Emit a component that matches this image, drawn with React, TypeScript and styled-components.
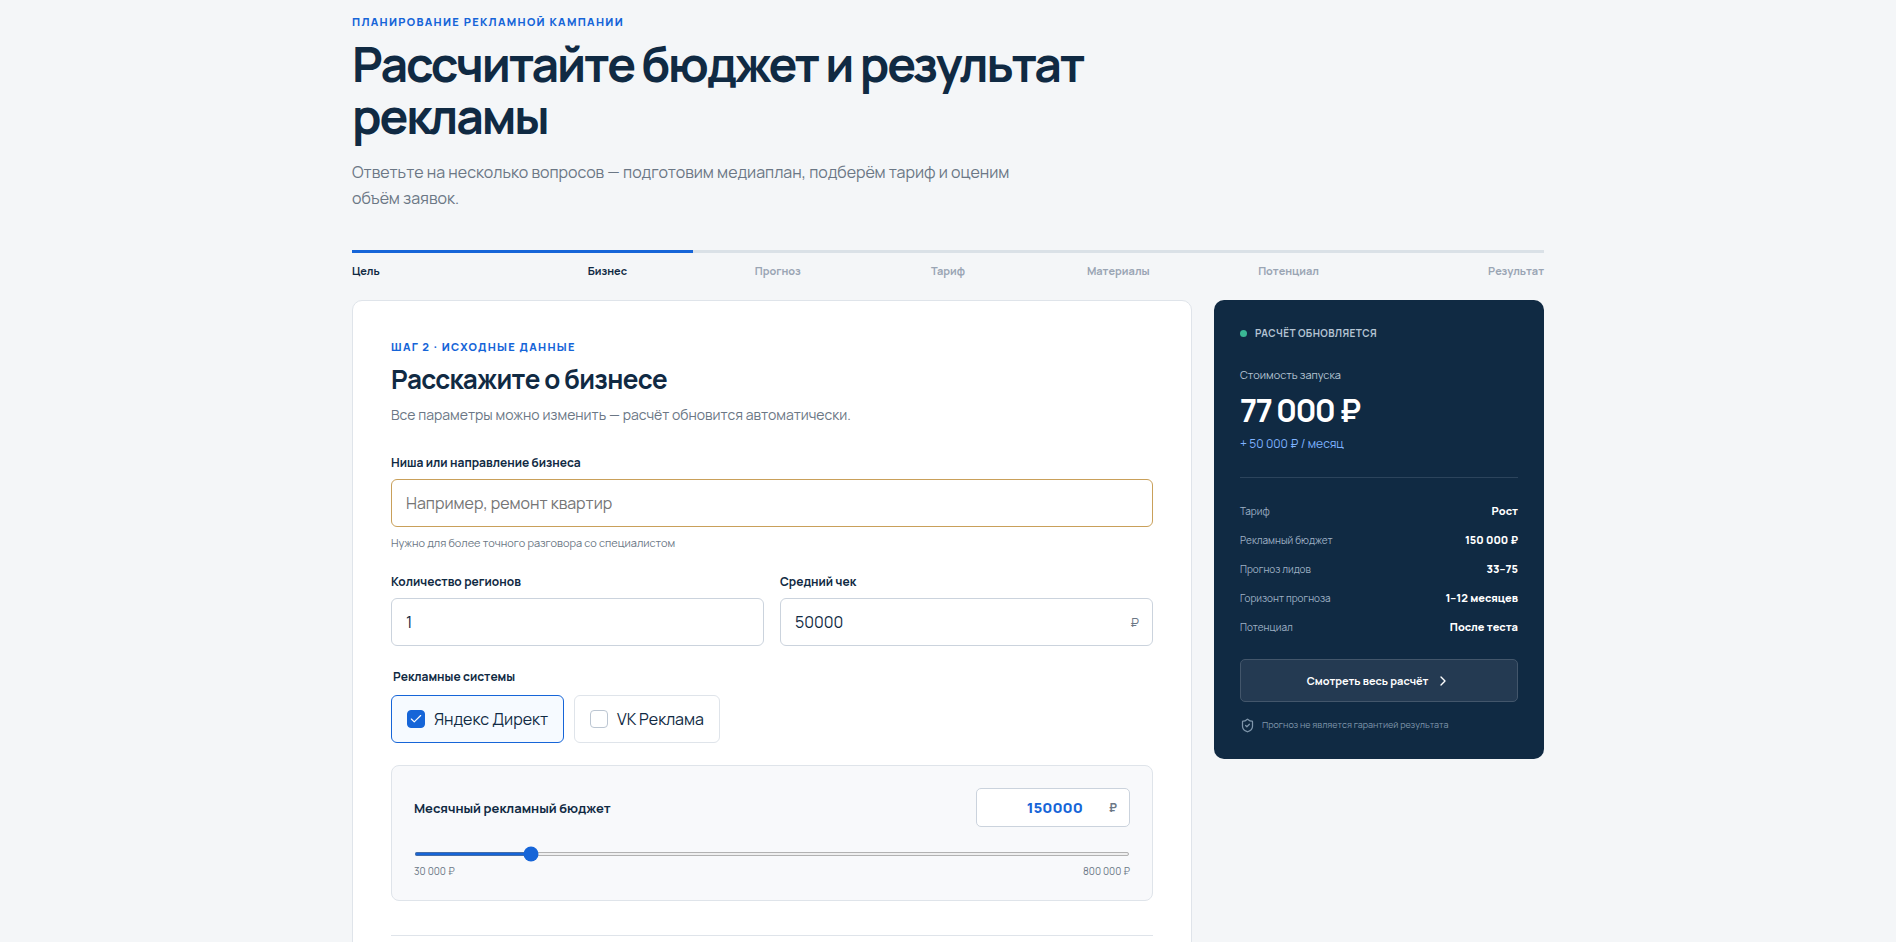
import React, { useState } from 'react';
import styled, { createGlobalStyle } from 'styled-components';
import { Check, ChevronRight, ShieldCheck } from 'lucide-react';

const navy = '#102a43';
const blue = '#1665d8';
const muted = '#6b7785';
const line = '#dfe4ea';
const fieldLine = '#cbd3dd';

const GlobalStyle = createGlobalStyle`
  *, *::before, *::after { box-sizing: border-box; }
  body {
    margin: 0;
    background: #f4f6f8;
    color: ${navy};
    font-family: Manrope, Inter, sans-serif;
    font-size: 16px;
  }
  button, input { font: inherit; color: inherit; }
  h1, h2, p, dl, dd, ol, fieldset { margin: 0; padding: 0; }
`;

const Screen = styled.div`
  height: 100vh;
  overflow-y: auto;
  scrollbar-width: none;
`;

const Page = styled.main`
  max-width: 1240px;
  margin: 0 auto;
  padding: 14px 24px 40px;
`;

const Eyebrow = styled.p`
  color: ${blue};
  font-size: 11px;
  line-height: 16px;
  font-weight: 800;
  letter-spacing: 0.12em;
  text-transform: uppercase;
`;

const Title = styled.h1`
  max-width: 780px;
  margin-top: 8px;
  font-size: 48px;
  line-height: 52px;
  font-weight: 700;
  letter-spacing: -0.045em;
`;

const Lead = styled.p`
  max-width: 680px;
  margin-top: 17px;
  color: ${muted};
  font-size: 16px;
  line-height: 26px;
`;

const Track = styled.div`
  height: 3px;
  margin-top: 39px;
  background: #dae1e7;
`;

const TrackFill = styled.div`
  height: 100%;
  background: ${blue};
`;

const Steps = styled.ol`
  display: grid;
  grid-template-columns: repeat(7, 1fr);
  margin-top: 10px;
  list-style: none;
`;

const Step = styled.li<{ $done: boolean }>`
  color: ${(p) => (p.$done ? navy : '#9aa5b4')};
  font-size: 11px;
  line-height: 16px;
  font-weight: 700;
  text-align: center;
  &:first-child { text-align: left; }
  &:last-child { text-align: right; }
`;

const Columns = styled.div`
  display: grid;
  grid-template-columns: minmax(0, 1fr) 330px;
  align-items: start;
  gap: 22px;
  margin-top: 21px;
`;

const Card = styled.section`
  padding: 38px;
  background: #fff;
  border: 1px solid ${line};
  border-radius: 10px;
`;

const CardTitle = styled.h2`
  margin-top: 7px;
  font-size: 26px;
  line-height: 34px;
  font-weight: 700;
  letter-spacing: -0.025em;
`;

const CardText = styled.p`
  margin-top: 9px;
  color: ${muted};
  font-size: 14px;
  line-height: 20px;
`;

const Form = styled.form`
  display: flex;
  flex-direction: column;
  gap: 22px;
  margin-top: 29px;
`;

const Pair = styled.div`
  display: grid;
  grid-template-columns: 1fr 1fr;
  gap: 16px;
`;

const Field = styled.div`
  display: flex;
  flex-direction: column;
`;

const Label = styled.label`
  margin-bottom: 8px;
  font-size: 12px;
  line-height: 17px;
  font-weight: 700;
`;

const InputBox = styled.div<{ $warn?: boolean }>`
  display: flex;
  align-items: center;
  height: 48px;
  padding: 0 13px 0 14px;
  background: #fff;
  border: 1px solid ${(p) => (p.$warn ? '#c9a05a' : fieldLine)};
  border-radius: 6px;
  color: ${muted};
  font-size: 13px;
`;

const TextInput = styled.input`
  flex: 1;
  min-width: 0;
  padding: 0;
  background: none;
  border: 0;
  outline: 0;
  color: ${navy};
  font-size: 16px;
  &::placeholder { color: #757575; opacity: 1; }
`;

const Hint = styled.p`
  margin-top: 8px;
  color: ${muted};
  font-size: 11px;
  line-height: 16px;
`;

const Systems = styled.fieldset`
  min-width: 0;
  border: 0;
`;

const Legend = styled.legend`
  padding: 0 2px;
  font-size: 12px;
  line-height: 17px;
  font-weight: 700;
`;

const Chips = styled.div`
  display: flex;
  gap: 10px;
  margin-top: 10px;
`;

const Chip = styled.label<{ $on: boolean }>`
  display: flex;
  align-items: center;
  gap: 9px;
  height: 48px;
  padding: 0 15px;
  background: ${(p) => (p.$on ? '#f6faff' : '#fff')};
  border: 1px solid ${(p) => (p.$on ? blue : line)};
  border-radius: 6px;
  font-size: 16px;
  cursor: pointer;
`;

const TickBox = styled.span`
  display: grid;
  width: 18px;
  height: 18px;
  > * { grid-area: 1 / 1; place-self: center; }
  svg { pointer-events: none; }
`;

const Tick = styled.input`
  appearance: none;
  width: 18px;
  height: 18px;
  margin: 0;
  background: #fff;
  border: 1px solid #bcc6d2;
  border-radius: 4px;
  &:checked { background: ${blue}; border-color: ${blue}; }
`;

const Budget = styled.div`
  padding: 22px;
  background: #f8f9fb;
  border: 1px solid ${line};
  border-radius: 8px;
`;

const BudgetHead = styled.div`
  display: flex;
  align-items: center;
  justify-content: space-between;
`;

const BudgetLabel = styled.label`
  font-size: 13px;
  line-height: 18px;
  font-weight: 700;
`;

const BudgetBox = styled.div`
  display: flex;
  align-items: center;
  width: 154px;
  height: 39px;
  padding: 0 12px;
  background: #fff;
  border: 1px solid ${fieldLine};
  border-radius: 5px;
  color: ${muted};
  font-size: 12px;
  font-weight: 700;
`;

const BudgetInput = styled(TextInput)`
  color: ${blue};
  font-size: 15px;
  font-weight: 800;
  text-align: right;
  padding-right: 26px;
`;

const Range = styled.input`
  display: block;
  width: 100%;
  height: 4px;
  margin: 25px 0 0;
  accent-color: ${blue};
`;

const Limits = styled.div`
  display: flex;
  justify-content: space-between;
  margin-top: 8px;
  color: ${muted};
  font-size: 10px;
  line-height: 14px;
`;

const Actions = styled.div`
  display: flex;
  justify-content: space-between;
  margin-top: 34px;
  padding-top: 24px;
  border-top: 1px solid ${line};
`;

const FormButton = styled.button<{ $primary?: boolean }>`
  height: 46px;
  padding: 0 22px;
  background: ${(p) => (p.$primary ? blue : '#fff')};
  border: 1px solid ${(p) => (p.$primary ? blue : fieldLine)};
  border-radius: 6px;
  color: ${(p) => (p.$primary ? '#fff' : navy)};
  font-size: 13px;
  font-weight: 700;
`;

const Summary = styled.aside`
  padding: 26px;
  background: ${navy};
  border-radius: 10px;
  color: #fff;
`;

const Status = styled.p`
  display: flex;
  align-items: center;
  gap: 8px;
  color: #b5c4d3;
  font-size: 10px;
  line-height: 14px;
  font-weight: 700;
  letter-spacing: 0.04em;
  text-transform: uppercase;
  &::before {
    content: '';
    width: 7px;
    height: 7px;
    background: #3ab795;
    border-radius: 50%;
  }
`;

const CostLabel = styled.p`
  margin-top: 27px;
  color: #b5c4d3;
  font-size: 11px;
  line-height: 16px;
`;

const Cost = styled.p`
  margin-top: 7px;
  font-size: 32px;
  line-height: 40px;
  font-weight: 700;
  letter-spacing: -0.05em;
`;

const Monthly = styled.p`
  margin-top: 6px;
  padding-bottom: 25px;
  border-bottom: 1px solid #2c445c;
  color: #7fb2ff;
  font-size: 12px;
  line-height: 16px;
`;

const Facts = styled.dl`
  display: flex;
  flex-direction: column;
  gap: 13px;
  margin-top: 25px;
`;

const Fact = styled.div`
  display: flex;
  align-items: center;
  justify-content: space-between;
  line-height: 16px;
`;

const FactName = styled.dt`
  color: #9fb1c5;
  font-size: 10px;
`;

const FactValue = styled.dd`
  font-size: 11px;
  font-weight: 800;
`;

const ResultButton = styled.button`
  display: flex;
  align-items: center;
  justify-content: center;
  gap: 7px;
  width: 100%;
  height: 43px;
  margin-top: 24px;
  padding: 0;
  background: #243a52;
  border: 1px solid #43566b;
  border-radius: 5px;
  font-size: 11px;
  font-weight: 700;
`;

const Note = styled.p`
  display: flex;
  align-items: center;
  gap: 7px;
  margin-top: 15px;
  color: #7f96ab;
  font-size: 9px;
  line-height: 16px;
`;

const steps = ['Цель', 'Бизнес', 'Прогноз', 'Тариф', 'Материалы', 'Потенциал', 'Результат'];
const currentStep = 2;

const facts = [
  ['Тариф', 'Рост'],
  ['Рекламный бюджет', '150 000 ₽'],
  ['Прогноз лидов', '33–75'],
  ['Горизонт прогноза', '1–12 месяцев'],
  ['Потенциал', 'После теста'],
];

type SystemChipProps = { name: string; initial: boolean };

function SystemChip({ name, initial }: SystemChipProps) {
  const [on, setOn] = useState(initial);
  return (
    <Chip $on={on}>
      <TickBox>
        <Tick type="checkbox" checked={on} onChange={() => setOn(!on)} />
        {on && <Check size={14} color="#fff" strokeWidth={2} />}
      </TickBox>
      {name}
    </Chip>
  );
}

export default function App() {
  const [budget, setBudget] = useState('150000');
  return (
    <Screen>
      <GlobalStyle />
      <Page>
        <header>
          <Eyebrow>Планирование рекламной кампании</Eyebrow>
          <Title>Рассчитайте бюджет и результат рекламы</Title>
          <Lead>
            Ответьте на несколько вопросов — подготовим медиаплан, подберём тариф и оценим объём заявок.
          </Lead>
        </header>
        <Track>
          <TrackFill style={{ width: `${(currentStep / steps.length) * 100}%` }} />
        </Track>
        <Steps>
          {steps.map((name, i) => (
            <Step key={name} $done={i < currentStep}>{name}</Step>
          ))}
        </Steps>
        <Columns>
          <Card>
            <Eyebrow>Шаг 2 · Исходные данные</Eyebrow>
            <CardTitle>Расскажите о бизнесе</CardTitle>
            <CardText>Все параметры можно изменить — расчёт обновится автоматически.</CardText>
            <Form onSubmit={(e) => e.preventDefault()}>
              <Field>
                <Label htmlFor="niche">Ниша или направление бизнеса</Label>
                <InputBox $warn>
                  <TextInput id="niche" placeholder="Например, ремонт квартир" />
                </InputBox>
                <Hint>Нужно для более точного разговора со специалистом</Hint>
              </Field>
              <Pair>
                <Field>
                  <Label htmlFor="regions">Количество регионов</Label>
                  <InputBox>
                    <TextInput id="regions" inputMode="numeric" defaultValue="1" />
                  </InputBox>
                </Field>
                <Field>
                  <Label htmlFor="check">Средний чек</Label>
                  <InputBox>
                    <TextInput id="check" inputMode="numeric" defaultValue="50000" />
                    ₽
                  </InputBox>
                </Field>
              </Pair>
              <Systems>
                <Legend>Рекламные системы</Legend>
                <Chips>
                  <SystemChip name="Яндекс Директ" initial />
                  <SystemChip name="VK Реклама" initial={false} />
                </Chips>
              </Systems>
              <Budget>
                <BudgetHead>
                  <BudgetLabel htmlFor="budget">Месячный рекламный бюджет</BudgetLabel>
                  <BudgetBox>
                    <BudgetInput
                      id="budget"
                      inputMode="numeric"
                      value={budget}
                      onChange={(e) => setBudget(e.target.value)}
                    />
                    ₽
                  </BudgetBox>
                </BudgetHead>
                <Range
                  type="range"
                  aria-label="Месячный рекламный бюджет"
                  min={30000}
                  max={800000}
                  step={10000}
                  value={budget}
                  onChange={(e) => setBudget(e.target.value)}
                />
                <Limits>
                  <span>30 000 ₽</span>
                  <span>800 000 ₽</span>
                </Limits>
              </Budget>
            </Form>
            <Actions>
              <FormButton type="button">Назад</FormButton>
              <FormButton type="button" $primary>Продолжить</FormButton>
            </Actions>
          </Card>
          <Summary>
            <Status>Расчёт обновляется</Status>
            <CostLabel>Стоимость запуска</CostLabel>
            <Cost>77 000 ₽</Cost>
            <Monthly>+ 50 000 ₽ / месяц</Monthly>
            <Facts>
              {facts.map(([name, value]) => (
                <Fact key={name}>
                  <FactName>{name}</FactName>
                  <FactValue>{value}</FactValue>
                </Fact>
              ))}
            </Facts>
            <ResultButton type="button">
              Смотреть весь расчёт
              <ChevronRight size={16} />
            </ResultButton>
            <Note>
              <ShieldCheck size={15} strokeWidth={2} />
              Прогноз не является гарантией результата
            </Note>
          </Summary>
        </Columns>
      </Page>
    </Screen>
  );
}
